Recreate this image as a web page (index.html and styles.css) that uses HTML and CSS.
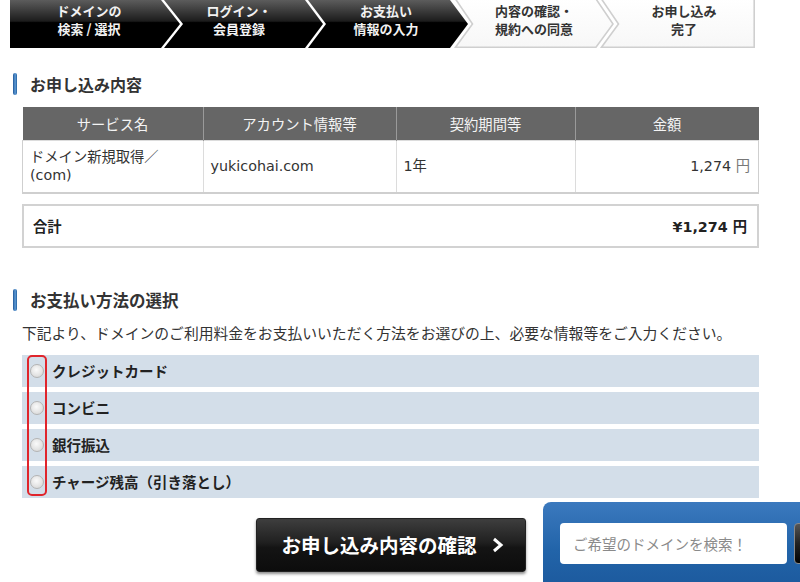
FILE: index.html
```html
<!DOCTYPE html>
<html lang="ja">
<head>
<meta charset="utf-8">
<title>お申し込み内容の確認</title>
<link rel="stylesheet" href="styles.css">
</head>
<body>
<div class="page">
  <svg class="steps" width="800" height="48" viewBox="0 0 800 48" xmlns="http://www.w3.org/2000/svg">
    <defs>
      <linearGradient id="dark" x1="0" y1="0" x2="0" y2="1">
        <stop offset="0" stop-color="#5c5c5c"/>
        <stop offset="0.44" stop-color="#1c1c1c"/>
        <stop offset="0.47" stop-color="#000"/>
        <stop offset="1" stop-color="#000"/>
      </linearGradient>
      <linearGradient id="light" x1="0" y1="0" x2="0" y2="1">
        <stop offset="0" stop-color="#fff"/>
        <stop offset="1" stop-color="#f7f7f7"/>
      </linearGradient>
    </defs>
    <polygon points="10,0 161,0 180,24 161,48 10,48" fill="url(#dark)"/>
    <polygon points="164,0 305,0 323,24 305,48 164,48 183,24" fill="url(#dark)"/>
    <polygon points="308,0 450,0 468,24 450,48 308,48 326,24" fill="url(#dark)"/>
    <polygon points="455.5,-1 596,-1 613,24 596,47.2 455.5,47.2 472.5,24" fill="url(#light)" stroke="#cfcfcf" stroke-width="1.6"/>
    <polygon points="601.5,-1 754.2,-1 754.2,47.2 601.5,47.2 618.5,24" fill="url(#light)" stroke="#cfcfcf" stroke-width="1.6"/>
    <g class="step-text on">
      <text x="89" y="16">ドメインの</text>
      <text x="89" y="33.5">検索 / 選択</text>
      <text x="239" y="16">ログイン・</text>
      <text x="239" y="33.5">会員登録</text>
      <text x="386" y="16">お支払い</text>
      <text x="386" y="33.5">情報の入力</text>
    </g>
    <g class="step-text off">
      <text x="534" y="16">内容の確認・</text>
      <text x="534" y="33.5">規約への同意</text>
      <text x="684" y="16">お申し込み</text>
      <text x="684" y="33.5">完了</text>
    </g>
  </svg>

  <main class="content">
    <h2 class="heading">お申し込み内容</h2>
    <table class="order">
      <thead>
        <tr>
          <th class="c1">サービス名</th>
          <th class="c2">アカウント情報等</th>
          <th class="c3">契約期間等</th>
          <th class="c4">金額</th>
        </tr>
      </thead>
      <tbody>
        <tr>
          <td>ドメイン新規取得／<br>(com)</td>
          <td>yukicohai.com</td>
          <td>1年</td>
          <td class="price">1,274 <span class="yen">円</span></td>
        </tr>
      </tbody>
    </table>

    <div class="total">
      <span>合計</span>
      <span>¥1,274 円</span>
    </div>

    <h2 class="heading heading-pay">お支払い方法の選択</h2>
    <p class="desc">下記より、ドメインのご利用料金をお支払いいただく方法をお選びの上、必要な情報等をご入力ください。</p>

    <div class="methods">
      <label class="method"><span class="radio"></span>クレジットカード</label>
      <label class="method"><span class="radio"></span>コンビニ</label>
      <label class="method"><span class="radio"></span>銀行振込</label>
      <label class="method"><span class="radio"></span>チャージ残高（引き落とし）</label>
      <div class="highlight"></div>
    </div>

    <div class="actions">
      <button class="confirm" type="button">お申し込み内容の確認
        <svg class="chev" width="12" height="16" viewBox="0 0 12 16"><polyline points="2,2 9,8 2,14" fill="none" stroke="#fff" stroke-width="3" stroke-linejoin="miter"/></svg>
      </button>
    </div>
  </main>

  <div class="search-widget">
    <div class="search-input">ご希望のドメインを検索！</div>
    <div class="search-btn"></div>
  </div>
</div>
</body>
</html>
```

FILE: styles.css
```css
html, body {
  margin: 0;
  padding: 0;
}
body {
  width: 800px;
  height: 582px;
  overflow: hidden;
  background: #fff;
  color: #333;
  font-family: "DejaVu Sans", "Noto Sans CJK JP", sans-serif;
  font-size: 14.5px;
}
.page {
  position: relative;
  width: 800px;
  height: 582px;
}
.steps {
  display: block;
}
.step-text text {
  font-family: "Noto Sans CJK JP", sans-serif;
  font-size: 13px;
  font-weight: 700;
  text-anchor: middle;
}
.step-text.on text {
  fill: #f2f2f2;
}
.step-text.off text {
  fill: #333;
}

.content {
  width: 737px;
  margin-left: 22px;
}

.heading {
  display: flex;
  align-items: center;
  gap: 13px;
  margin: 25px 0 0 -9px;
  height: 22px;
  font-family: "Noto Sans CJK JP", sans-serif;
  font-size: 16px;
  font-weight: 700;
  color: #333;
}
.heading::before {
  content: "";
  width: 4px;
  height: 22px;
  border-radius: 2px;
  background: linear-gradient(to right, #1d5596, #5f9bd6 55%, #23609f);
}
.heading-pay {
  margin-top: 41px;
  font-size: 16.5px;
}

.order {
  width: 733px;
  margin-top: 12px;
  border-collapse: collapse;
  table-layout: fixed;
}
.order th {
  height: 33px;
  padding: 0;
  background: #666;
  color: #f4f4f4;
  font-family: "Noto Sans CJK JP", sans-serif;
  font-weight: 400;
  font-size: 14.3px;
  text-align: center;
  border-left: 1px solid #9a9a9a;
}
.order th:first-child {
  border-left: none;
}
.order .c1 { width: 180px; }
.order .c2 { width: 192px; }
.order .c3 { width: 178px; }
.order .c4 { width: 183px; }
.order td {
  height: 52px;
  padding: 0 8px 0 7px;
  box-sizing: border-box;
  line-height: 18px;
  font-size: 14.3px;
  color: #333;
  border: 1px solid #dcdcdc;
  border-bottom: 2px solid #cfcfcf;
}
.order td:first-child {
  border-left: 1px solid #cfcfcf;
}
.order td:last-child {
  border-right: 1px solid #cfcfcf;
}
.order .price {
  text-align: right;
}
.yen {
  color: #777;
}

.total {
  display: flex;
  justify-content: space-between;
  align-items: center;
  box-sizing: border-box;
  height: 44px;
  margin-top: 10px;
  padding: 0 10px 0 9px;
  border: 2px solid #d2d2d2;
  font-weight: 700;
  font-size: 14.3px;
  color: #222;
}

.desc {
  margin: 12px 0 0 0;
  line-height: 20px;
  font-family: "Noto Sans CJK JP", sans-serif;
  font-size: 14.8px;
  color: #333;
  white-space: nowrap;
}

.methods {
  position: relative;
  display: flex;
  flex-direction: column;
  gap: 5px;
  margin-top: 12px;
}
.method {
  display: flex;
  align-items: center;
  gap: 8px;
  height: 32px;
  padding-left: 8px;
  background: #d3dee9;
  font-family: "Noto Sans CJK JP", sans-serif;
  font-weight: 700;
  font-size: 14.5px;
  color: #222;
}
.radio {
  width: 12px;
  height: 12px;
  border-radius: 50%;
  border: 1px solid #b4b4b4;
  background: radial-gradient(circle at 45% 40%, #fafafa 0%, #e4e4e4 55%, #cfcfcf 100%);
}
.highlight {
  position: absolute;
  left: 5px;
  top: 0;
  width: 16px;
  height: 137px;
  border: 2px solid #e0252c;
  border-radius: 5px;
}

.actions {
  display: flex;
  justify-content: center;
  margin-top: 20px;
}
.confirm {
  display: flex;
  align-items: center;
  justify-content: center;
  gap: 15px;
  width: 270px;
  height: 54px;
  padding: 0 0 0 4px;
  border: 1px solid #222;
  border-radius: 3px;
  background: linear-gradient(to bottom, #3e3e3e 0%, #202020 45%, #141414 55%, #0c0c0c 100%);
  box-shadow: 0 2px 3px rgba(0, 0, 0, 0.45);
  color: #fff;
  font-family: "Noto Sans CJK JP", sans-serif;
  font-weight: 700;
  font-size: 19.5px;
}
.chev {
  display: block;
}

.search-widget {
  position: absolute;
  left: 543px;
  top: 502px;
  right: 0;
  bottom: 0;
  display: flex;
  align-items: flex-start;
  gap: 7px;
  padding: 21px 0 0 17px;
  box-sizing: border-box;
  border-radius: 8px 0 0 0;
  background: linear-gradient(to bottom, #3b79be 0%, #2264a9 60%, #1d5b9f 100%);
  overflow: hidden;
}
.search-input {
  flex: none;
  display: flex;
  align-items: center;
  box-sizing: border-box;
  width: 227px;
  height: 41px;
  padding-left: 13px;
  border-radius: 4px;
  background: #fff;
  color: #8a8a8a;
  font-family: "Noto Sans CJK JP", sans-serif;
  font-size: 14.5px;
}
.search-btn {
  flex: none;
  width: 40px;
  height: 41px;
  box-sizing: border-box;
  border: 1px solid #888;
  border-radius: 4px;
  background: linear-gradient(to bottom, #555 0%, #222 50%, #000 100%);
}
```
